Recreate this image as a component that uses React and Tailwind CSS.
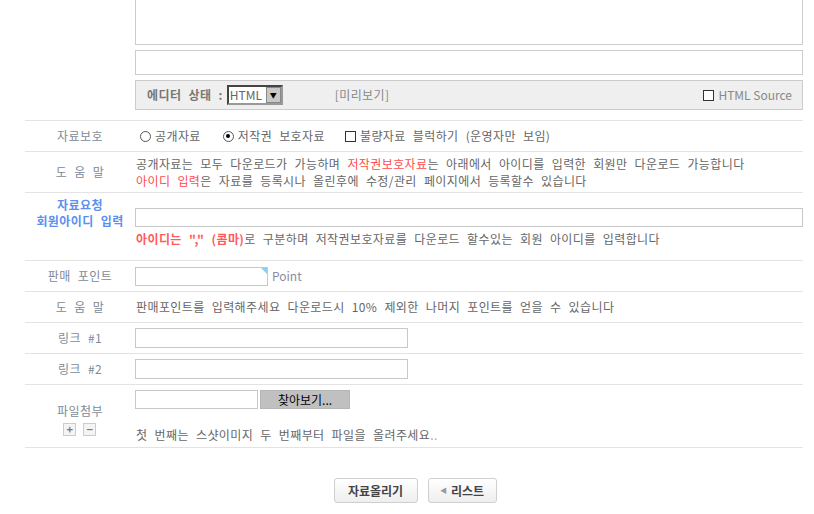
import React from 'react';

const font = { fontFamily: '"Noto Sans CJK KR", "Liberation Sans", sans-serif' };

const Row = ({ label, children, className = '', labelClass = 'items-center' }) => (
  <div className={`flex border-b border-[#e3e3e3] ${className}`}>
    <div className={`w-[110px] shrink-0 flex justify-center text-[12px] text-[#7d8a99] ${labelClass}`}>{label}</div>
    <div className="flex-1 flex flex-col justify-center text-[12px] text-[#666]">{children}</div>
  </div>
);

const Radio = ({ checked }) => (
  <span className="w-[11px] h-[11px] rounded-full border border-[#555] bg-white inline-flex items-center justify-center mr-[4px]">
    {checked && <span className="w-[4px] h-[4px] rounded-full bg-black" />}
  </span>
);

const Box = () => <span className="w-[11px] h-[11px] border border-[#333] bg-white inline-block mr-[4px]" />;

export default function App() {
  return (
    <div style={font} className="w-[814px] h-[514px] bg-white overflow-hidden tracking-[0.4px] [word-spacing:4px]">
      <div className="ml-[25px] w-[778px]">
        {/* editor */}
        <div className="ml-[110px]">
          <div className="h-[45px] border border-t-0 border-[#cccccc] bg-white" />
          <div className="mt-[5px] h-[25px] border border-[#cccccc] bg-white" />
          <div className="mt-[5px] h-[30px] border border-[#cccccc] bg-[#efefef] flex items-center pl-[11px] pr-[10px] text-[12px]">
            <span className="font-bold text-[#777]">에디터 상태 :</span>
            <span className="ml-[4px] h-[20px] w-[56px] border-2 border-[#444] border-r-[#999] border-b-[#999] bg-white flex items-center tracking-normal">
              <span className="flex-1 text-[#666] pl-[1px] leading-none">HTML</span>
              <span className="w-[15px] h-[16px] bg-[#c8c8c8] border border-[#888] flex items-center justify-center text-[7px] text-black">▼</span>
            </span>
            <span className="ml-[52px] text-[#888]">[미리보기]</span>
            <span className="ml-auto flex items-center text-[#888] tracking-normal [word-spacing:0px]"><Box />HTML Source</span>
          </div>
        </div>

        <div className="mt-[10px] border-t border-[#e3e3e3]">
          <Row label="자료보호" className="h-[31px]">
            <div className="flex items-center pl-[5px]">
              <Radio /><span>공개자료</span>
              <span className="ml-[22px] flex items-center"><Radio checked /><span>저작권 보호자료</span></span>
              <span className="ml-[20px] flex items-center"><Box /><span>불량자료 블럭하기 (운영자만 보임)</span></span>
            </div>
          </Row>
          <Row label="도 움 말" className="h-[41px]">
            <div className="leading-[17px] pl-[1px]">
              <div>공개자료는 모두 다운로드가 가능하며 <span className="text-[#ff4b4b]">저작권보호자료</span>는 아래에서 아이디를 입력한 회원만 다운로드 가능합니다</div>
              <div><span className="text-[#ff4b4b]">아이디 입력</span>은 자료를 등록시나 올린후에 수정/관리 페이지에서 등록할수 있습니다</div>
            </div>
          </Row>
          <Row
            label={<div className="text-center leading-[16px] font-bold text-[#5b8ff0] pt-[4px]">자료요청<br />회원아이디 입력</div>}
            labelClass="items-start"
            className="h-[68px]"
          >
            <div className="pt-[2px]">
              <div className="h-[19px] border border-[#c8c8c8] bg-white" />
              <div className="mt-[3px] pl-[1px]"><span className="font-bold text-[#ff5a5a]">아이디는 "," (콤마)</span>로 구분하며 저작권보호자료를 다운로드 할수있는 회원 아이디를 입력합니다</div>
            </div>
          </Row>
          <Row label="판매 포인트" className="h-[31px]">
            <div className="flex items-center">
              <div className="relative w-[133px] h-[19px] border border-[#c8c8c8] bg-white">
                <span className="absolute top-0 right-0 w-0 h-0 border-t-[6px] border-l-[6px] border-t-[#8ed0ee] border-l-transparent" />
              </div>
              <span className="ml-[4px] text-[#8a8aa8] tracking-normal">Point</span>
            </div>
          </Row>
          <Row label="도 움 말" className="h-[31px]">
            <div className="pl-[1px]">판매포인트를 입력해주세요 다운로드시 10% 제외한 나머지 포인트를 얻을 수 있습니다</div>
          </Row>
          <Row label="링크 #1" className="h-[31px]">
            <div className="w-[273px] h-[20px] border border-[#c8c8c8] bg-white" />
          </Row>
          <Row label="링크 #2" className="h-[31px]">
            <div className="w-[273px] h-[20px] border border-[#c8c8c8] bg-white" />
          </Row>
          <Row
            label={
              <div className="flex flex-col items-center mt-[6px]">
                <span>파일첨부</span>
                <span className="flex gap-[7px] mt-[3px]">
                  <span className="w-[13px] h-[13px] border border-[#ccc] bg-[#f4f4f4] flex items-center justify-center text-[11px] font-bold leading-none text-[#777]">+</span>
                  <span className="w-[13px] h-[13px] border border-[#ccc] bg-[#f4f4f4] flex items-center justify-center text-[11px] font-bold leading-none text-[#777]">−</span>
                </span>
              </div>
            }
            className="h-[63px]"
          >
            <div className="flex flex-col justify-start h-full pt-[5px]">
              <div className="flex items-center">
                <div className="w-[123px] h-[19px] border border-[#c8c8c8] bg-white" />
                <div className="ml-[2px] w-[90px] h-[19px] bg-[#c0c0c0] border border-[#b5b5b5] flex items-center justify-center text-[12px] text-black tracking-normal">찾아보기...</div>
              </div>
              <div className="mt-[17px] pl-[1px]">첫 번째는 스샷이미지 두 번째부터 파일을 올려주세요<span className="text-[#aab]">..</span></div>
            </div>
          </Row>
        </div>

        <div className="flex justify-center gap-[10px] mt-[30px] pl-[2px]">
          <button className="w-[84px] h-[25px] rounded-[3px] border border-[#cfcfcf] bg-gradient-to-b from-white to-[#eeeeee] text-[12px] font-bold text-[#444] tracking-normal">자료올리기</button>
          <button className="w-[69px] h-[25px] rounded-[3px] border border-[#cfcfcf] bg-gradient-to-b from-white to-[#eeeeee] text-[12px] font-bold text-[#444] flex items-center justify-center tracking-normal">
            <span className="text-[7px] text-[#999] mr-[4px]">◀</span>리스트
          </button>
        </div>
      </div>
    </div>
  );
}
